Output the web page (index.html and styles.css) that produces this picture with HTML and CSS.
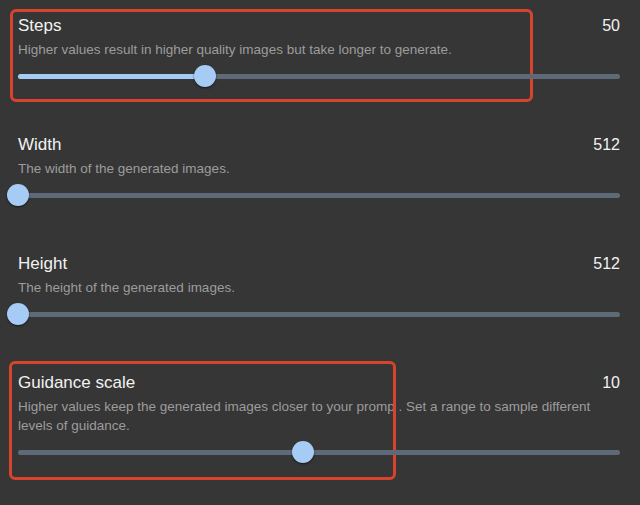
FILE: index.html
```html
<!DOCTYPE html>
<html lang="en">
<head>
    <meta charset="UTF-8">
    <meta name="viewport" content="width=device-width, initial-scale=1.0">
    <title>Generation settings</title>
    <link rel="stylesheet" href="styles.css">
</head>
<body>
    <div class="settings">
        <div class="setting">
            <div class="mark mark-steps"></div>
            <div class="setting-head"><span class="setting-name">Steps</span><span class="setting-value">50</span></div>
            <p class="setting-desc">Higher values result in higher quality images but take longer to generate.</p>
            <div class="slider">
                <div class="track"></div>
                <div class="fill" style="width: 31%"></div>
                <div class="thumb" style="left: 31%"></div>
            </div>
        </div>

        <div class="setting">
            <div class="setting-head"><span class="setting-name">Width</span><span class="setting-value">512</span></div>
            <p class="setting-desc">The width of the generated images.</p>
            <div class="slider">
                <div class="track"></div>
                <div class="thumb" style="left: 0%"></div>
            </div>
        </div>

        <div class="setting">
            <div class="setting-head"><span class="setting-name">Height</span><span class="setting-value">512</span></div>
            <p class="setting-desc">The height of the generated images.</p>
            <div class="slider">
                <div class="track"></div>
                <div class="thumb" style="left: 0%"></div>
            </div>
        </div>

        <div class="setting">
            <div class="mark mark-guidance"></div>
            <div class="setting-head"><span class="setting-name">Guidance scale</span><span class="setting-value">10</span></div>
            <p class="setting-desc">Higher values keep the generated images closer to your promp . Set a range to sample different levels of guidance.</p>
            <div class="slider">
                <div class="track"></div>
                <div class="thumb" style="left: 47.3%"></div>
            </div>
        </div>
    </div>
</body>
</html>
```

FILE: styles.css
```css
body {
    margin: 0;
    background-color: #363636;
    font-family: 'Liberation Sans', Arial, sans-serif;
    color: #f2f2f2;
}
.settings {
    padding: 1px 20px 0 18px;
}
.setting {
    position: relative;
    padding: 15px 0 33px 0;
}
.setting-head {
    display: flex;
    justify-content: space-between;
    font-size: 17px;
    line-height: 20px;
}
.setting-value {
    font-size: 16px;
}
.setting-desc {
    margin: 4px 0 0 0;
    max-width: 600px;
    font-size: 13.5px;
    line-height: 19px;
    color: #9c9c9c;
}
.slider {
    position: relative;
    height: 22px;
    margin-top: 6px;
}
.track, .fill {
    position: absolute;
    left: 0;
    top: 9px;
    height: 5px;
    border-radius: 3px;
}
.track {
    right: 0;
    background: #5f6a79;
}
.fill {
    background: #a3cbf5;
}
.thumb {
    position: absolute;
    top: 0;
    width: 22px;
    height: 22px;
    margin-left: -11px;
    border-radius: 50%;
    background: #a6ccf6;
    box-shadow: 0 1px 2px rgba(0, 0, 0, 0.6);
}
/* annotation boxes drawn over the screenshot */
.mark {
    position: absolute;
    border: 3px solid #d6442d;
    border-radius: 6px;
    pointer-events: none;
}
.mark-steps {
    left: -8px;
    top: 8px;
    width: 517px;
    height: 87px;
}
.mark-guidance {
    left: -9px;
    top: 3px;
    width: 381px;
    height: 113px;
}
```
